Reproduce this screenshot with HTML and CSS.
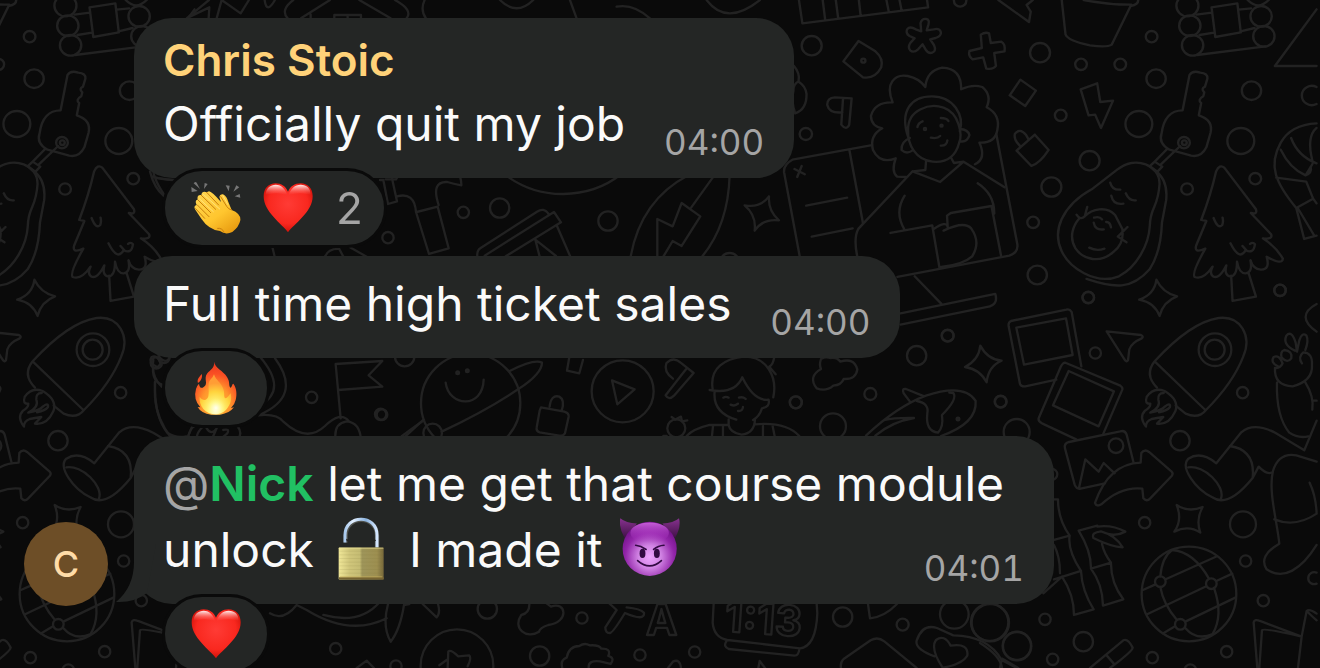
FILE: index.html
```
<!DOCTYPE html>
<html lang="en">
<head>
<meta charset="utf-8">
<title>Group chat</title>
<link rel="stylesheet" href="styles.css">
</head>
<body>
  <svg class="wallpaper" aria-hidden="true">
    <defs>
      <g id="doodles">
        <!-- woman, laptop, avocado, tree -->
        <g transform="translate(780 0) scale(.3444 .3333)">
          <path d="M55 0L65 70L430 22L427 0M124 0L131 58M162 0L169 55M229 0L234 46M309 0L316 36M347 0L353 31"/>
          <path d="M634 0L723 66L728 35L716 15L734 0"/>
          <path d="M818 0L829 103Q836 122 900 136Q950 143 963 134L1018 18Q1041 14 1040 0M882 0Q950 14 1020 14"/>
          <circle cx="523" cy="2" r="18"/><circle cx="92" cy="137" r="29"/><circle cx="755" cy="158" r="29"/>
          <circle cx="874" cy="193" r="17"/><circle cx="988" cy="193" r="17"/><circle cx="1079" cy="110" r="17"/>
          <circle cx="1092" cy="236" r="28"/><circle cx="1369" cy="272" r="28"/><circle cx="1042" cy="372" r="39"/>
          <circle cx="1338" cy="423" r="39"/><circle cx="899" cy="482" r="29"/><circle cx="788" cy="561" r="29"/>
          <circle cx="815" cy="346" r="17"/><circle cx="735" cy="667" r="17"/><circle cx="747" cy="825" r="28"/>
          <circle cx="895" cy="893" r="17"/><circle cx="1182" cy="567" r="17"/><circle cx="1380" cy="536" r="17"/>
          <circle cx="1452" cy="871" r="17"/><circle cx="75" cy="402" r="18"/><circle cx="487" cy="1007" r="17"/>
          <path d="M1558 261A29 29 0 1 0 1558 312"/>
          <path d="M410 94L408 69Q413 54 425 57Q435 59 431 74L426 91L446 88Q463 83 467 96Q469 108 452 114L436 118L447 135Q455 153 442 158Q431 162 423 149L414 133L401 148Q388 160 378 151Q370 142 379 128L391 115L376 108Q364 100 369 88Q377 77 394 88Z"/>
          <path d="M583 104Q596 95 607 100L612 129L643 125Q655 132 652 154L622 159L627 198Q620 209 599 206L590 172L559 178Q546 168 550 153L586 144Z"/>
          <path d="M228 123L277 154Q301 175 294 202Q276 238 241 232L184 184Z"/><circle cx="242" cy="182" r="6"/>
          <path d="M208 295L201 374Q192 393 178 374L183 295M208 295L159 292Q137 294 137 314Q143 341 181 337"/>
          <path d="M40 197Q59 220 54 244Q38 253 39 273Q31 300 44 340Q78 328 77 282Q74 258 55 246"/>
          <path d="M698 239L743 272L712 318L667 286ZM873 268L921 250L930 306L967 302L932 384L915 344L896 346ZM740 404L780 450Q755 490 730 498L687 452L740 404M696 437Q678 418 682 402Q696 382 714 404L721 417"/>
          <path d="M263 436L36 479Q9 494 12 518L57 768M202 453L241 670M341 831L666 767Q693 757 689 732L628 402M350 940L625 882Q635 914 602 921L350 974M391 829L468 911"/>
          <path d="M42 507L72 523M63 498L50 531M76 617L195 593M92 710L211 685"/>
          <path d="M327 307Q311 265 326 244Q341 222 371 228Q404 235 422 261Q426 212 471 203Q527 205 526 268Q559 252 587 261Q616 286 600 322Q641 344 631 390Q625 430 579 428Q600 476 566 493M327 307Q275 305 264 348Q265 379 297 385Q259 407 270 450Q290 493 336 475Q322 514 340 530L366 531"/>
          <path d="M373 414C345 331 382 289 441 289C505 289 536 348 522 393M372 390C370 330 433 308 475 323C521 340 530 404 520 429C508 476 476 488 443 485C394 480 370 434 372 390ZM522 387Q546 388 550 405Q544 428 522 424M377 414Q351 425 353 450Q367 464 384 452"/>
          <path d="M399 381Q401 369 414 364M467 354Q484 354 489 363M438 413Q457 417 465 408M486 421Q484 438 467 437"/>
          <circle cx="421" cy="387" r="3"/><circle cx="469" cy="377" r="3"/>
          <path d="M424 485L422 510L385 514L228 686Q213 712 224 768M385 514L465 546L533 485L652 562M496 472L505 489L533 485M362 587Q331 637 362 690M574 550Q623 583 622 641M321 699L442 676L463 803M487 682L485 647L496 639L614 618L642 768M445 688Q484 660 487 682M475 692Q535 662 555 685Q584 727 558 769Q531 794 468 801"/>
          <path d="M818 657Q844 602 905 568L980 508C1035 465 1103 497 1102 552C1098 625 1075 620 1074 675C1071 738 1034 802 984 829C914 857 840 802 818 754Q796 706 818 657ZM1088 511Q1128 540 1121 602L1109 668Q1106 755 1074 807C1021 870 970 865 890 837"/>
          <path d="M861 644Q872 662 885 649L892 621M885 649C906 627 948 617 973 645L994 687Q1000 731 969 755C930 792 881 780 858 745C838 712 851 676 870 654M1009 681L981 710L1006 727M898 743Q920 755 942 746M912 653Q928 648 935 658M911 668Q914 692 940 688M947 666Q958 665 961 682M959 548Q964 571 988 569M962 587Q968 616 997 611M1004 580Q1014 604 1033 601"/>
          <path d="M1169 331L1189 225Q1198 210 1220 218Q1243 220 1241 236L1234 260Q1221 266 1232 277L1229 289Q1211 300 1223 309L1216 346Q1259 360 1250 399L1238 442Q1223 473 1194 467L1131 449Q1098 430 1108 400Q1117 331 1169 331ZM1124 447L1088 485M1162 438L1106 493M1088 485L1110 500L1096 515L1073 499Z"/>
          <circle cx="1173" cy="428" r="17"/><circle cx="1174" cy="428" r="7"/>
          <path d="M1223 660Q1251 583 1266 515Q1276 491 1290 503L1382 628Q1387 645 1367 639L1426 703Q1432 719 1402 715Q1440 740 1460 776Q1459 797 1413 770Q1424 810 1396 809Q1374 807 1366 781Q1373 818 1352 820Q1333 821 1327 785Q1327 831 1306 829Q1289 825 1296 796Q1275 840 1257 829Q1246 820 1256 800Q1229 841 1204 831Q1194 820 1235 746Q1200 762 1209 735L1238 663ZM1259 654Q1272 689 1284 675Q1288 665 1285 653M1308 730Q1334 784 1352 751Q1375 763 1379 733Q1373 725 1365 732M1343 738L1354 751M1310 827L1314 903L1382 890L1360 817"/>
          <path d="M1558 370Q1483 374 1454 428C1416 497 1440 550 1499 624L1548 596L1528 545L1441 533M1454 449Q1480 505 1526 526L1546 492M1484 414Q1504 469 1558 490M1558 384Q1528 410 1546 483M1499 624L1522 717L1558 707M1505 627L1552 708M1548 596L1558 610M1541 500Q1545 519 1526 526"/>
          <path d="M1093 839Q1111 878 1153 889Q1113 904 1102 948Q1088 908 1043 899Q1087 884 1093 839Z"/>
          <circle cx="1183" cy="17" r="32"/><circle cx="1190" cy="77" r="31"/><circle cx="1198" cy="136" r="31"/>
          <circle cx="1397" cy="49" r="31"/><circle cx="1405" cy="109" r="31"/><path d="M1358 0Q1388 32 1419 0M1253 22L1328 10L1338 97L1264 111ZM1209 44L1254 38M1331 29L1368 25M1218 105L1260 98M1337 94L1378 84M1211 165L1410 139M1558 28L1437 198H1558"/>
        </g>
        <!-- photos, rocket, globe and the rest of the right side -->
        <g transform="translate(980 290) scale(.3333)">
          <path d="M304 229L275 66Q269 56 259 59L93 93Q84 97 86 109L120 282Q124 291 136 289L229 269M109 113L258 85L278 195L132 224ZM258 219L421 287Q429 293 427 299L370 431M258 219Q249 215 242 231L176 385Q174 394 186 400L290 449M266 243L402 304L356 409L219 346Z"/>
          <path d="M461 519L440 434Q435 420 421 424L267 456Q251 461 255 475L284 584Q290 599 302 596L375 580M297 594L316 508L356 545L371 519L404 550"/><circle cx="408" cy="467" r="22"/>
          <path d="M345 639Q386 521 482 518L484 489Q494 476 507 486L575 545Q581 551 575 558L510 626Q500 636 490 625L487 596Q423 589 364 643Q350 652 345 639Z"/>
          <path d="M380 124L483 135Q493 140 484 146Q455 158 448 178L444 211Q439 218 432 206Z"/>
          <path d="M524 214C580 153 650 94 716 84C783 76 816 139 790 199C763 269 720 318 678 360Q656 388 617 371L587 347M524 214L676 360M524 214Q492 254 531 293"/>
          <circle cx="705" cy="179" r="49"/><circle cx="704" cy="179" r="30"/>
          <path d="M498 410Q476 382 495 362Q512 352 511 341Q493 343 500 321Q520 290 554 303Q599 330 586 364Q567 406 531 401L550 381Q530 384 515 387Q497 394 498 410ZM511 368Q544 351 535 329Q533 309 551 309M537 367Q562 362 570 351Q572 335 553 351Q547 360 511 368"/>
          <circle cx="325" cy="22" r="17"/><circle cx="346" cy="189" r="17"/><circle cx="62" cy="335" r="17"/><circle cx="788" cy="308" r="17"/>
          <circle cx="600" cy="452" r="29"/><circle cx="494" cy="698" r="17"/><circle cx="789" cy="703" r="39"/><circle cx="797" cy="813" r="17"/>
          <circle cx="850" cy="932" r="17"/><circle cx="740" cy="1085" r="17"/><circle cx="195" cy="988" r="17"/><circle cx="310" cy="1055" r="29"/>
          <circle cx="218" cy="1108" r="17"/><circle cx="517" cy="1103" r="17"/><circle cx="631" cy="1140" r="17"/><circle cx="900" cy="1" r="17"/><circle cx="110" cy="426" r="39"/><circle cx="216" cy="553" r="16"/>
          <path d="M1010 848A18 18 0 1 0 1010 881M1010 42Q944 78 1010 125"/>
          <path d="M750 468Q827 480 818 564Q744 655 697 622C646 597 599 532 625 506Q663 482 709 520L784 427Q821 395 887 429L973 481L1010 392M625 532C672 524 737 588 723 626M818 564L836 530Q859 554 875 548"/>
          <path d="M945 182Q907 164 919 137Q935 119 947 158L951 185L958 151Q966 126 979 136Q987 153 976 180M895 230Q870 218 881 201Q898 193 908 220Q901 236 885 234Q882 287 938 289Q999 273 996 225Q998 188 970 187Q953 201 966 220M905 203Q900 185 913 180Q938 183 934 205Q923 221 905 203ZM891 278Q888 379 928 428Q955 446 985 439M976 277Q1003 320 997 359M999 332H1010"/>
          <path d="M1010 515L949 496Q896 487 879 543C864 602 892 697 898 761Q834 798 860 838C910 873 965 838 1010 765M883 688Q946 714 1010 671M989 578Q1008 618 1010 671"/>
          <path d="M590 645Q626 669 668 651Q647 689 661 728Q625 704 583 725Q608 690 590 645Z"/>
          <circle cx="627" cy="912" r="142"/><circle cx="541" cy="875" r="16"/><circle cx="694" cy="881" r="16"/><circle cx="601" cy="1003" r="16"/>
          <path d="M541 859Q546 802 576 780Q641 785 687 866M541 891Q550 943 591 990M702 894Q731 976 698 1032Q650 1054 615 1013M557 868L711 799M487 901L525 884M503 972L679 889M709 873L757 851M550 1030L585 1009M616 995L766 923"/>
          <path d="M222 628H234Q234 688 269 737L222 750M269 737Q262 780 303 843L222 868M222 765Q240 799 240 850M303 843Q306 903 341 958L282 975Q282 914 246 860M190 910L246 860M296 722L352 707M296 722Q334 784 333 836Q368 883 369 947L430 928Q392 877 393 818L333 836M393 818Q372 790 366 762M363 724Q334 727 340 744Q395 771 428 772Q407 736 363 724ZM352 710Q397 704 436 725Q411 739 384 732"/>
          <circle cx="31" cy="998" r="56"/><circle cx="111" cy="1068" r="43"/><path d="M0 1059Q62 1098 66 1134M66 1106L115 1134M330 1134L430 1051Q444 1045 458 1073Q458 1083 390 1134M378 1094L404 1124"/>
          <path d="M832 1134L821 997Q824 986 840 993L965 1040M838 1134L846 1021Q850 1013 965 1040L954 1134M965 1040L980 963Q988 955 1010 971M980 963Q998 981 1010 991"/>
        </g>
        <!-- strips between the messages -->
        <g transform="translate(380 170) scale(.3333)">
          <path d="M370 10Q450 73 550 72Q650 70 720 15M0 30H10L24 102L51 94L35 20M17 28H48L62 5M51 79Q103 65 108 126L147 252L206 235L173 110L110 126M176 105Q152 33 202 36Q220 42 244 46Q245 27 232 0"/>
          <circle cx="250" cy="127" r="17"/><circle cx="359" cy="114" r="29"/><circle cx="24" cy="203" r="17"/><circle cx="684" cy="153" r="29"/><circle cx="1049" cy="278" r="29"/>
          <path d="M292 260Q290 241 302 234L471 125Q492 111 506 132M314 257L522 126L543 157L377 259M531 168L571 260M466 209L479 260M466 209L528 258M752 260Q783 90 925 16M966 260Q1045 165 1049 15M1003 16L934 112M832 260V147L878 169L905 99L961 139L905 228L878 213L850 260"/>
          <path d="M1167 79Q1164 122 1197 151Q1150 145 1124 182Q1130 136 1094 106Q1141 115 1167 79Z"/>
          <circle cx="272" cy="700" r="149"/><circle cx="158" cy="789" r="28"/><circle cx="233" cy="608" r="4"/><circle cx="262" cy="602" r="4"/>
          <path d="M197 638C206 712 309 717 311 629M389 603Q463 566 486 578Q486 611 414 658Q321 721 185 785M132 750L65 799"/>
          <path d="M568 562L561 602L598 610L609 570M483 712L553 725Q567 729 566 740L555 790Q550 799 538 797L479 787Q468 783 470 773L479 722Z M509 710Q513 673 538 680Q556 690 545 722"/>
          <circle cx="728" cy="664" r="93"/><path d="M696 631L764 658L712 703ZM879 626Q850 605 859 580Q880 558 902 578L941 609L882 677Q867 692 857 676L918 598"/>
          <circle cx="889" cy="775" r="27"/><path d="M875 741L886 749L903 740L906 754L922 751M850 798H860"/>
          <circle cx="1248" cy="697" r="18"/><circle cx="6" cy="734" r="16"/><circle cx="74" cy="560" r="29"/>
          <path d="M989 660Q1065 674 1087 622Q1122 695 1166 689Q1171 711 1146 715Q1138 740 1119 750M998 657C988 590 1038 567 1090 560C1160 558 1193 620 1180 682M1004 665Q998 728 1069 749M1046 748V765Q1050 788 1085 794Q1124 790 1125 748M1030 683Q1038 678 1046 683M1077 683Q1088 679 1097 687M1052 704Q1065 710 1074 701M1089 711Q1088 724 1074 723M1046 765H989Q940 777 920 798M1125 763Q1218 754 1258 798M999 770L996 798M1029 768V798M1149 768V798M1178 768L1184 798M1183 561Q1179 585 1168 590L1187 613"/>
        </g>
        <g transform="translate(700 300) scale(.3333)">
          <path d="M363 177Q377 169 390 174Q411 170 421 185Q462 172 472 208Q468 239 431 237Q424 255 400 257Q378 276 350 265Q323 230 363 207Q357 195 363 177"/>
          <circle cx="287" cy="307" r="18"/><circle cx="511" cy="282" r="18"/><circle cx="399" cy="379" r="39"/><circle cx="650" cy="167" r="29"/><circle cx="743" cy="107" r="18"/><circle cx="902" cy="305" r="18"/>
          <path d="M498 407Q590 320 678 287Q793 249 827 303Q832 370 723 408M673 289L618 267Q605 264 611 280L630 305M526 407Q576 365 642 354Q580 353 555 360M651 303Q688 310 682 340Q676 394 714 398Q731 381 726 345Q774 297 760 279L748 278"/>
          <circle cx="774" cy="357" r="4"/><path d="M841 137Q863 179 905 182Q865 199 860 247Q839 207 795 201Q837 180 841 137Z"/>
        </g>
        <g transform="translate(0 160) scale(.3333)">
          <circle cx="1142" cy="763" r="17"/><circle cx="935" cy="712" r="17"/>
          <path d="M817 260L824 290M975 290Q986 265 1018 267L1030 290M1050 262L1100 290M1022 775L1007 612L1147 603L1106 646L1147 680L1015 690M780 590Q865 690 780 735M825 595Q910 710 775 766Q830 760 850 785Q920 850 975 798Q1022 752 1046 783M1007 840Q1000 790 1040 784Q1080 787 1083 840M1205 840L1270 780M465 665V710Q470 780 515 835M460 600Q453 650 485 680M563 840Q567 805 585 798M610 798Q575 835 605 840M620 805Q635 828 650 805L637 835M670 810Q690 805 682 820L664 835H690M712 798Q730 820 712 840"/>
          <circle cx="469" cy="609" r="17"/><circle cx="492" cy="592" r="17"/>
          <path d="M450 35Q463 85 492 108M458 50Q490 60 525 60"/>
        </g>
        <g transform="scale(.3333)">
          <path d="M560 55L627 0M570 50L628 22L626 55M650 55L665 0L722 40L747 0M794 0Q800 44 825 0M880 0Q840 30 863 55M903 55L990 0M1078 0L1172 55M1185 0Q1240 30 1220 55M1003 55V45H1083V55M1043 45V55M932 43V55M1274 0Q1260 30 1278 55M1500 0Q1550 50 1600 0M1710 0L1730 55M1850 20Q1900 10 1950 55M2120 0Q2180 80 2280 0"/>
        </g>
        <g transform="translate(320 500) scale(.3333)">
          <circle cx="502" cy="327" r="29"/><circle cx="786" cy="354" r="17"/><circle cx="47" cy="446" r="17"/><circle cx="228" cy="498" r="17"/><circle cx="659" cy="468" r="29"/><circle cx="960" cy="465" r="17"/><circle cx="1124" cy="456" r="17"/><circle cx="411" cy="497" r="109"/>
          <path d="M-150 340Q-110 365 -70 315L-40 330Q90 410 200 355M10 345Q120 375 180 305M204 312Q186 380 212 425Q240 390 252 315M252 315L268 312M308 312L350 352Q362 340 354 312M628 310Q630 339 604 345C576 385 620 419 657 395Q660 383 685 375C750 366 738 302 693 320L680 310M868 310L890 330L856 382Q856 400 870 399Q879 398 915 339Q975 365 972 338Q962 326 920 322"/>
          <text class="glyph" x="978" y="405">A</text>
          <path d="M383 504L385 454Q393 448 415 469L447 466Q456 472 443 499M358 496L380 480M110 504L140 482L162 504M727 504Q720 480 740 473Q747 438 778 438Q794 427 809 436Q838 434 844 446Q875 445 865 468Q886 474 872 492L840 484Q805 480 806 502M1044 504L1060 484Q1080 476 1083 504"/>
        </g>
        <g transform="translate(700 560) scale(.3333)">
          <path d="M41 130L38 188Q42 233 82 240L300 265Q348 259 352 160L350 130M79 244Q69 260 86 267L284 287Q296 287 298 267"/>
          <text class="glyph" x="72" y="214" transform="rotate(4 72 214)">1:13</text>
          <circle cx="428" cy="171" r="29"/><circle cx="608" cy="194" r="18"/><circle cx="763" cy="163" r="43"/><circle cx="869" cy="187" r="56"/><circle cx="951" cy="258" r="42"/>
          <path d="M504 132L510 175Q553 171 591 132M423 324Q420 307 431 297L512 241Q533 229 553 244L650 324M704 289Q644 267 650 242Q667 190 711 204L760 226Q865 228 905 300L900 324M905 300L950 324M728 323Q690 266 708 240Q733 221 752 257Q807 248 802 287Q786 314 728 323M175 324L179 303L195 324"/>
        </g>
      </g>
    </defs>
    <use href="#doodles"/>
    <use href="#doodles" x="-1122"/>
  </svg>

  <!-- shared emoji -->
  <svg class="sprites" aria-hidden="true">
    <defs>
      <radialGradient id="heartFill" cx=".5" cy=".42" r=".62">
        <stop offset="0" stop-color="#ff3b35"/><stop offset=".65" stop-color="#f9281f"/><stop offset="1" stop-color="#c80d05"/>
      </radialGradient>
      <linearGradient id="shine" x2="0" y2="1"><stop stop-color="#fff" stop-opacity=".95"/><stop offset="1" stop-color="#ff6b65" stop-opacity="0"/></linearGradient>
      <symbol id="heart" viewBox="304 49 156 162">
        <path fill="url(#heartFill)" d="M382 203C363 177 309 142 309 95C309 71 324 56 345 56C362 56 375 65 382 81C389 65 402 56 420 56C441 56 456 71 456 95C456 142 401 177 382 203Z"/>
        <path fill="url(#shine)" d="M315 91C315 70 330 60 345 60C363 60 374 73 380 91Q345 80 315 91ZM384 91C390 72 403 60 420 60C438 60 450 70 450 91Q420 80 384 91Z"/>
      </symbol>
    </defs>
  </svg>

  <main class="chat">
    <article class="message">
      <div class="bubble">
        <h2 class="sender">Chris Stoic</h2>
        <p class="text">Officially quit my job</p>
        <time class="time">04:00</time>
      </div>
      <button class="reactions" type="button" aria-label="2 reactions">
        <svg class="emoji" viewBox="88 47 156 162">
          <defs><linearGradient id="hand" x2=".8" y2="1"><stop stop-color="#ffd753"/><stop offset=".6" stop-color="#ffc62f"/><stop offset="1" stop-color="#e89b10"/></linearGradient></defs>
          <path fill="#777" d="M99 54Q105 47 108 52L118 71ZM92 65L111 77L93 80ZM130 71L132 53L141 56ZM195 60L207 61L204 78ZM218 79L227 60L236 66ZM222 93L237 86L239 97Z"/>
          <path fill="url(#hand)" d="M176 95Q178 85 187 87Q199 94 203 110L213 134Q241 145 239 165Q235 185 215 200Q195 210 178 197Q144 193 122 160L103 132Q98 120 108 119Q101 104 111 103Q108 87 122 89Q124 76 138 81L145 78Q153 78 181 110Z"/>
          <path fill="none" stroke="#c87e0d" stroke-width="3" stroke-linecap="round" d="M110 119L145 154M112 104L150 142M122 90L165 132M138 81L174 119M105 130L132 159M180 94L198 123Q203 132 213 134M171 189Q184 187 190 200"/>
          <path fill="none" stroke="#ffe17a" stroke-width="3" stroke-linecap="round" d="M127 86L177 131M117 101L158 139M187 91L201 117"/>
        </svg>
        <svg class="emoji"><use href="#heart"/></svg>
        <span class="count">2</span>
      </button>
    </article>

    <article class="message">
      <div class="bubble">
        <p class="text">Full time high ticket sales</p>
        <time class="time">04:00</time>
      </div>
      <button class="reactions" type="button" aria-label="1 reaction">
        <svg class="emoji" viewBox="90 43 156 162">
          <defs>
            <radialGradient id="flame" cx=".5" cy=".82" r=".78"><stop stop-color="#ffc43a"/><stop offset=".45" stop-color="#ff942c"/><stop offset=".75" stop-color="#fa5024"/><stop offset="1" stop-color="#e93a20"/></radialGradient>
            <radialGradient id="core" cx=".5" cy=".92" r=".7"><stop stop-color="#ffffef"/><stop offset=".3" stop-color="#fff780"/><stop offset=".7" stop-color="#ffd33d"/><stop offset="1" stop-color="#ff9d35"/></radialGradient>
            <radialGradient id="glow"><stop stop-color="#fffff0"/><stop offset="1" stop-color="#fff780" stop-opacity="0"/></radialGradient>
          </defs>
          <path fill="url(#flame)" d="M163 45C164 64 190 72 201 91C211 107 205 116 211 123C217 121 215 113 220 111C229 122 232 142 227 160Q224 174 213 184L222 182Q207 202 178 204H154Q123 200 113 181L121 182Q99 158 108 127Q112 115 117 111C118 122 124 127 131 121C147 112 129 97 142 80C151 68 163 66 163 45ZM125 82C129 92 121 105 114 109C110 98 118 91 125 82Z"/>
          <path fill="url(#core)" d="M162 83C167 101 184 108 190 127C195 142 190 150 196 155C205 153 206 145 212 140C219 167 201 201 169 203C135 203 116 177 119 150C127 162 140 165 145 149C149 127 141 110 151 99Q159 93 162 83Z"/>
          <ellipse fill="url(#glow)" cx="168" cy="184" rx="28" ry="30"/>
        </svg>
      </button>
    </article>

    <article class="message">
      <div class="avatar">C</div>
      <div class="bubble last">
        <svg class="tail" viewBox="0 0 40 60" aria-hidden="true"><path d="M18 0V18Q18 43 0 58Q18 59 31 49L40 0Z"/></svg>
        <p class="text"><span class="at">@</span><a class="mention" href="#nick">Nick</a> let me get that course module unlock
          <svg class="inline-emoji" role="img" aria-label="unlocked" viewBox="33 52 180 188">
            <defs>
              <linearGradient id="brass"><stop stop-color="#f0e798"/><stop offset=".24" stop-color="#d0c67b"/><stop offset=".47" stop-color="#c5bc73"/><stop offset=".52" stop-color="#9e955a"/><stop offset=".85" stop-color="#9d8f50"/><stop offset="1" stop-color="#77683a"/></linearGradient>
              <linearGradient id="steel"><stop stop-color="#a9c9ed"/><stop offset=".25" stop-color="#e2efff"/><stop offset=".65" stop-color="#8bb3df"/><stop offset="1" stop-color="#d5e7ff"/></linearGradient>
            </defs>
            <path fill="none" stroke="#51534e" stroke-width="13" d="M77 128V108C77 44 171 44 171 108V143"/>
            <path fill="none" stroke="url(#steel)" stroke-width="9" d="M75 128V106C75 42 171 42 171 106V143"/>
            <path fill="#222" d="M78 117L85 120L81 127ZM163 117L168 122L163 126Z"/>
            <rect x="56" y="143" width="135" height="96" rx="2" fill="url(#brass)"/>
            <path stroke="#eee59a" stroke-width="2" d="M57 145H190"/>
            <path stroke="#80753e" stroke-width="1" opacity=".4" d="M58 154H190M58 165H190M58 176H190M58 187H190M58 198H190M58 209H190M58 220H190"/>
            <path fill="#776432" d="M57 232H191V239H57Z"/><path stroke="#c5ad5c" stroke-width="2" d="M60 231H187"/>
          </svg>
          I made it
          <svg class="inline-emoji" role="img" aria-label="smiling devil" viewBox="900 52 184 188">
            <defs>
              <radialGradient id="face" cx=".5" cy=".65" r=".6"><stop stop-color="#eda4ff"/><stop offset=".35" stop-color="#d184e4"/><stop offset=".75" stop-color="#9225a9"/><stop offset="1" stop-color="#75138c"/></radialGradient>
              <linearGradient id="horn" x2="0" y2="1"><stop stop-color="#87328f"/><stop offset="1" stop-color="#401047"/></linearGradient>
              <linearGradient id="brow" x2="0" y2="1"><stop stop-color="#c65fd8"/><stop offset="1" stop-color="#a126b9" stop-opacity="0"/></linearGradient>
            </defs>
            <path fill="url(#horn)" d="M901 53Q918 68 952 69L914 114Q895 80 901 53ZM1081 53Q1064 68 1030 69L1069 114Q1088 80 1081 53Z"/>
            <circle cx="991" cy="147" r="83" fill="url(#face)"/>
            <ellipse cx="991" cy="98" rx="59" ry="32" fill="url(#brow)"/>
            <path fill="none" stroke="#320a43" stroke-width="5" stroke-linecap="round" d="M948 136Q964 137 980 149M1035 136Q1017 137 1003 149M954 183Q991 216 1027 183"/>
            <ellipse cx="969" cy="161" rx="9" ry="14" fill="#320a43"/><ellipse cx="1013" cy="161" rx="9" ry="14" fill="#320a43"/>
          </svg>
        </p>
        <time class="time">04:01</time>
      </div>
      <button class="reactions" type="button" aria-label="1 reaction">
        <svg class="emoji"><use href="#heart"/></svg>
      </button>
    </article>
  </main>
</body>
</html>
```
FILE: styles.css
```
* {
  box-sizing: border-box;
}

body {
  margin: 0;
  min-height: 100vh;
  overflow: hidden;
  background: #0a0a0a;
  color: #fafafa;
  font-family: Inter, "Liberation Sans", sans-serif;
}

.wallpaper {
  position: fixed;
  top: 0;
  left: 0;
  z-index: -1;
  width: 100%;
  height: 100%;
  fill: none;
  stroke: #222;
  stroke-width: 7px;
  stroke-linecap: round;
  stroke-linejoin: round;
}

.glyph {
  font-size: 126px;
  font-weight: 700;
}

.sprites {
  position: absolute;
  width: 0;
  height: 0;
}

.chat {
  display: flex;
  flex-direction: column;
  gap: 8px;
  padding: 18px 24px;
}

/* avatar column + bubble column */
.message {
  display: grid;
  grid-template-columns: 84px minmax(0, 1fr);
  column-gap: 26px;
  justify-items: start;
}

.bubble {
  position: relative;
  grid-column: 2;
  display: grid;
  max-width: 920px;
  padding: 15px 30px 21px 29px;
  background: #242625;
  border-radius: 38px;
}

.sender {
  margin: 0 0 4px;
  color: #ffd279;
  font-size: 44px;
  font-weight: 600;
  line-height: 54px;
}

.text {
  margin: 0;
  padding-right: 139px;
  font-size: 48px;
  line-height: 66px;
}

.last .text {
  padding-right: 0;
}

/* time sits in the last line of the text */
.text,
.time {
  grid-area: 2 / 1;
}

.time {
  justify-self: end;
  align-self: end;
  color: #a5a5a5;
  font-size: 35px;
  font-variant-numeric: tabular-nums;
  line-height: 30px;
}

.mention {
  color: #21c063;
  font-weight: 600;
  text-decoration: none;
}

.at {
  color: #a5a5a5;
}

.avatar {
  grid-column: 1;
  align-self: end;
  width: 84px;
  height: 84px;
  margin-bottom: -2px;
  border-radius: 50%;
  background: #6d4e27;
  color: #ffdca8;
  font-size: 36px;
  font-weight: 500;
  line-height: 84px;
  text-align: center;
}

.tail {
  position: absolute;
  left: -18px;
  bottom: 0;
  width: 40px;
  height: 60px;
  fill: #242625;
}

.inline-emoji {
  width: 60px;
  height: 63px;
  margin: 0 4px;
  vertical-align: -13px;
}

.reactions {
  position: relative;
  grid-column: 2;
  display: flex;
  align-items: center;
  gap: 20px;
  height: 80px;
  margin: -10px 0 0 28px;
  padding: 0 25px;
  border: 3px solid #0a0a0a;
  border-radius: 40px;
  background: #242625;
  color: #a5a5a5;
  font: inherit;
}

.emoji {
  width: 52px;
  height: 54px;
}

.count {
  margin: 0 -4px 0 2px;
  font-size: 44px;
}
```
